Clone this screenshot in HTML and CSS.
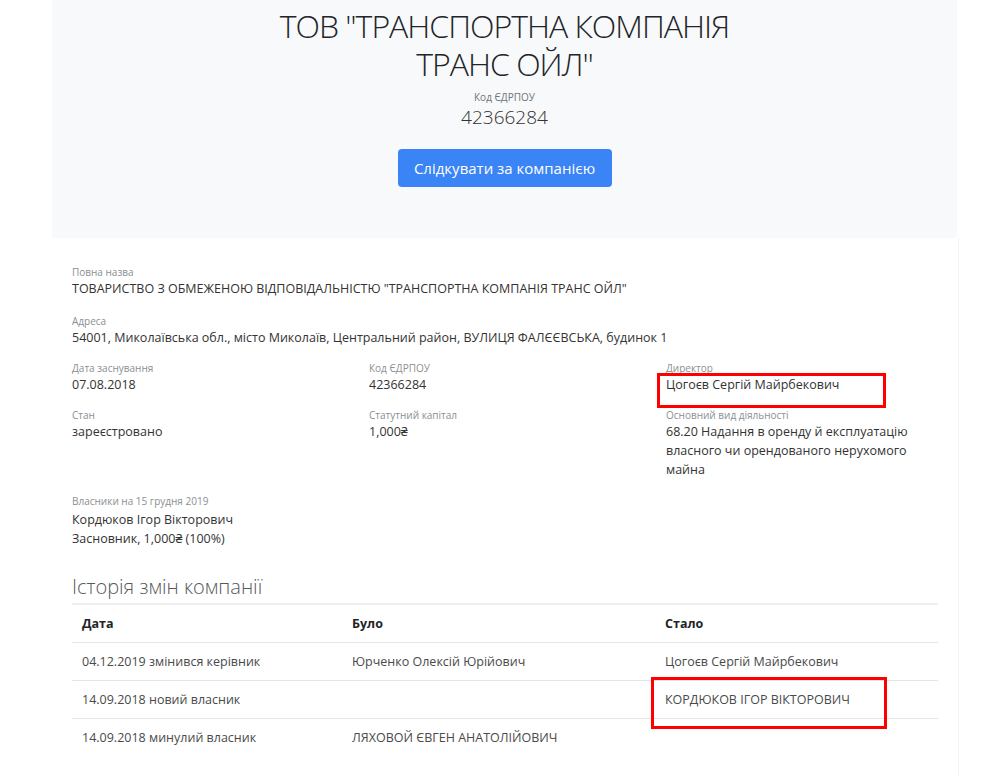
FILE: index.html
```html
<!DOCTYPE html>
<html lang="uk">
<head>
<meta charset="utf-8">
<title>ТОВ "ТРАНСПОРТНА КОМПАНІЯ ТРАНС ОЙЛ"</title>
<link rel="stylesheet" href="styles.css">
</head>
<body>
<div class="page">
  <header class="hero">
    <h1 class="hero-title"><span class="title-line">ТОВ "ТРАНСПОРТНА КОМПАНІЯ</span><span class="title-line">ТРАНС ОЙЛ"</span></h1>
    <div class="hero-code-label">Код ЄДРПОУ</div>
    <div class="hero-code">42366284</div>
    <button class="btn-follow" type="button">Слідкувати за компанією</button>
  </header>

  <section class="card">
    <div class="field">
      <div class="label">Повна назва</div>
      <div class="value">ТОВАРИСТВО З ОБМЕЖЕНОЮ ВІДПОВІДАЛЬНІСТЮ "ТРАНСПОРТНА КОМПАНІЯ ТРАНС ОЙЛ"</div>
    </div>
    <div class="field">
      <div class="label">Адреса</div>
      <div class="value">54001, Миколаївська обл., місто Миколаїв, Центральний район, ВУЛИЦЯ ФАЛЄЄВСЬКА, будинок 1</div>
    </div>

    <div class="grid3">
      <div class="col">
        <div class="field tight">
          <div class="label">Дата заснування</div>
          <div class="value">07.08.2018</div>
        </div>
        <div class="field last">
          <div class="label">Стан</div>
          <div class="value">зареєстровано</div>
        </div>
      </div>
      <div class="col">
        <div class="field tight">
          <div class="label">Код ЄДРПОУ</div>
          <div class="value">42366284</div>
        </div>
        <div class="field last">
          <div class="label">Статутний капітал</div>
          <div class="value">1,000₴</div>
        </div>
      </div>
      <div class="col">
        <div class="field tight">
          <div class="label">Директор</div>
          <div class="value">Цогоєв Сергій Майрбекович</div>
        </div>
        <div class="field last">
          <div class="label">Основний вид діяльності</div>
          <div class="value">68.20 Надання в оренду й експлуатацію власного чи орендованого нерухомого майна</div>
        </div>
      </div>
    </div>

    <div class="field">
      <div class="label">Власники на 15 грудня 2019</div>
      <div class="value owners">Кордюков Ігор Вікторович<br>Засновник, 1,000₴ (100%)</div>
    </div>

    <h2 class="section-title">Історія змін компанії</h2>
    <table class="history">
      <thead>
        <tr><th class="c1">Дата</th><th class="c2">Було</th><th>Стало</th></tr>
      </thead>
      <tbody>
        <tr><td>04.12.2019 змінився керівник</td><td>Юрченко Олексій Юрійович</td><td>Цогоєв Сергій Майрбекович</td></tr>
        <tr><td>14.09.2018 новий власник</td><td></td><td>КОРДЮКОВ ІГОР ВІКТОРОВИЧ</td></tr>
        <tr><td>14.09.2018 минулий власник</td><td>ЛЯХОВОЙ ЄВГЕН АНАТОЛІЙОВИЧ</td><td></td></tr>
      </tbody>
    </table>
  </section>

  <div class="mark mark-director"></div>
  <div class="mark mark-owner"></div>
</div>
</body>
</html>
```
FILE: styles.css
```css
html, body {
  margin: 0;
  padding: 0;
  background: #ffffff;
}
body {
  font-family: "Open Sans", "Noto Sans", sans-serif;
  color: #333333;
  height: 776px;
  overflow: hidden;
}
.page {
  position: relative;
  width: 906px;
  margin-left: 52px;
}
.hero {
  background: #f8f9fa;
  border-radius: 0 0 4px 4px;
  height: 238px;
  box-sizing: border-box;
  padding-top: 8px;
  text-align: center;
  width: 905px;
}
.hero-title {
  margin: 0;
  font-size: 32px;
  font-weight: 300;
  letter-spacing: -1px;
  color: #212529;
}
.title-line {
  display: block;
  height: 38px;
  line-height: 36px;
}
.hero-code-label {
  margin-top: 6px;
  font-size: 10px;
  line-height: 14px;
  color: #6c757d;
}
.hero-code {
  font-size: 19px;
  font-weight: 300;
  line-height: 26px;
  color: #333;
}
.btn-follow {
  margin-top: 19px;
  width: 214px;
  height: 38px;
  border: none;
  border-radius: 4px;
  background: #3a84f6;
  color: #ffffff;
  font-family: inherit;
  font-size: 15px;
  line-height: 22px;
  padding: 0;
  cursor: pointer;
}
.card {
  background: #ffffff;
  padding: 27px 20px 20px 20px;
  box-shadow: 1px 0 1px rgba(0,0,0,0.04);
}
.field {
  margin-bottom: 16px;
}
.field.tight {
  margin-bottom: 14px;
}
.field.last {
  margin-bottom: 15px;
}
.label {
  font-size: 10px;
  line-height: 14px;
  color: #8a8f94;
}
.value {
  font-size: 12.5px;
  line-height: 19px;
  color: #333333;
}
.value.owners {
  margin-top: 2px;
}
.grid3 {
  display: grid;
  grid-template-columns: 297px 297px 1fr;
  margin-top: -2px;
}
.grid3 .col .value {
  max-width: 250px;
}
.section-title {
  margin: 26px 0 3px 0;
  font-size: 20px;
  font-weight: 300;
  line-height: 26px;
  color: #55595c;
}
.history {
  width: 866px;
  border-collapse: collapse;
  font-size: 12.5px;
}
.history th, .history td {
  text-align: left;
  padding: 9px 10px;
  line-height: 19px;
  border-top: 1px solid #e3e6e9;
  vertical-align: top;
  color: #4a4a4a;
}
.history th {
  font-weight: 700;
  color: #212529;
}
.history thead th {
  border-top: 2px solid #eceef0;
}
.history .c1 { width: 250px; }
.history .c2 { width: 293px; }
.mark {
  position: absolute;
  border: 3px solid #ff0000;
  box-sizing: border-box;
}
.mark-director {
  left: 605px;
  top: 373px;
  width: 229px;
  height: 35px;
}
.mark-owner {
  left: 599px;
  top: 677px;
  width: 236px;
  height: 52px;
}
```
